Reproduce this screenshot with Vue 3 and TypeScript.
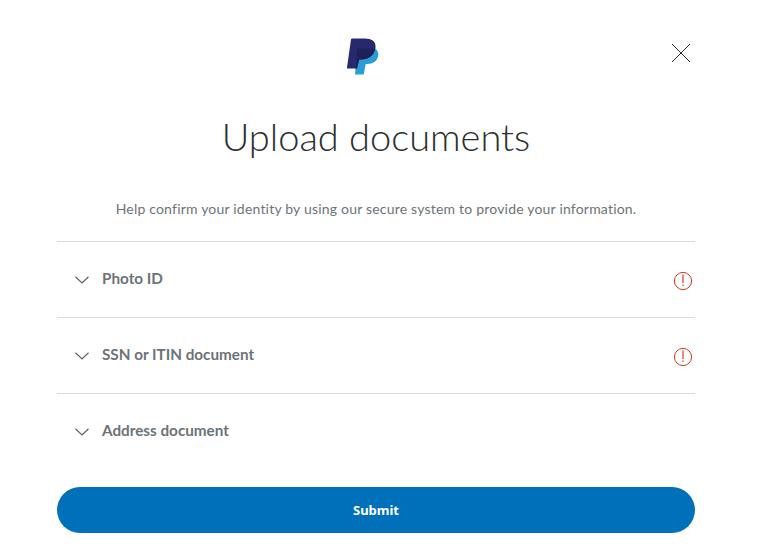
<template>
  <div class="dialog">
    <header class="top">
      <svg class="logo" width="32" height="38" viewBox="0 0 32 38">
        <path fill="#2a9dd8" d="M10 11h18.500c2.300 1.500 3.300 4 2.700 7-1.100 5.200-5.200 8-10.700 8h-1.800l-2 10.500H8z" />
        <path fill="#27296e" d="M5.200 0.500H18c7.800 0 11.800 3.800 10.200 10.800-1.500 6.500-6.700 10.200-14 10.200h-2L10 30.500H0.800c-.6 0-.9-.4-.8-1L4 1.500c.1-.7.500-1 1.200-1z" />
        <path fill="#1e2058" d="M10.400 10.500h17.900c-1.600 7-6.800 11-14.100 11h-2L10 30.500H8.600l1.800-20z" />
      </svg>
      <button class="close" type="button" aria-label="Close">
        <svg width="20" height="20" viewBox="0 0 20 20">
          <path d="M1 1l18 18M19 1L1 19" stroke="#2c2e2f" stroke-width="1" fill="none" />
        </svg>
      </button>
    </header>

    <h1 class="title">Upload documents</h1>
    <p class="intro">Help confirm your identity by using our secure system to provide your information.</p>

    <ul class="docs">
      <li v-for="doc in docs" :key="doc.name" class="doc">
        <svg class="chev" width="14" height="8" viewBox="0 0 14 8">
          <path d="M.5.800L7 7l6.500-6.200" stroke="#5f6368" stroke-width="1.200" fill="none" />
        </svg>
        <span class="doc-name">{{ doc.name }}</span>
        <svg v-if="doc.missing" class="alert" width="20" height="20" viewBox="0 0 20 20">
          <circle cx="10" cy="10" r="8.600" stroke="#d03c1f" stroke-width="1" fill="none" />
          <path d="M10 3.500v8.500" stroke="#d03c1f" stroke-width="1.200" />
          <path d="M10 13.500v1.600" stroke="#d03c1f" stroke-width="1.200" />
        </svg>
      </li>
    </ul>

    <button class="submit" type="button">Submit</button>
  </div>
</template>

<script setup lang="ts">
const docs = [
  { name: "Photo ID", missing: true },
  { name: "SSN or ITIN document", missing: true },
  { name: "Address document", missing: false },
];
</script>

<style scoped>
.dialog {
  width: 638px;
  padding: 38px 81px 0 57px;
  font-family: Lato, "Noto Sans", sans-serif;
  color: #6c7378;
}

.top {
  display: flex;
  justify-content: center;
  position: relative;
  height: 38px;
}

.logo {
  margin-right: 27px;
}

.close {
  position: absolute;
  right: 4px;
  top: 5px;
  padding: 0;
  border: 0;
  background: none;
  display: flex;
}

.title {
  margin: 35px 0 0;
  text-align: center;
  font-size: 38px;
  line-height: 50px;
  font-weight: 300;
  color: #2c2e2f;
}

.intro {
  margin: 38px 0 0;
  text-align: center;
  font-size: 14px;
  line-height: 20px;
  letter-spacing: 0.2px;
}

.docs {
  list-style: none;
  margin: 22px 0 0;
  padding: 0;
}

.doc {
  display: flex;
  align-items: center;
  height: 75px;
  border-top: 1px solid #dcdcdc;
  padding: 0 2px 0 18px;
}

.chev {
  margin-right: 13px;
}

.doc-name {
  font-size: 15.25px;
  font-weight: 700;
  margin-top: -3px;
}

.alert {
  margin-left: auto;
  margin-top: 3px;
}

.submit {
  display: block;
  width: 100%;
  height: 46px;
  margin-top: 18px;
  border: 0;
  border-radius: 23px;
  background: #0070ba;
  color: #fff;
  font-family: "Noto Sans", sans-serif;
  font-size: 13px;
  font-weight: 700;
}
</style>
